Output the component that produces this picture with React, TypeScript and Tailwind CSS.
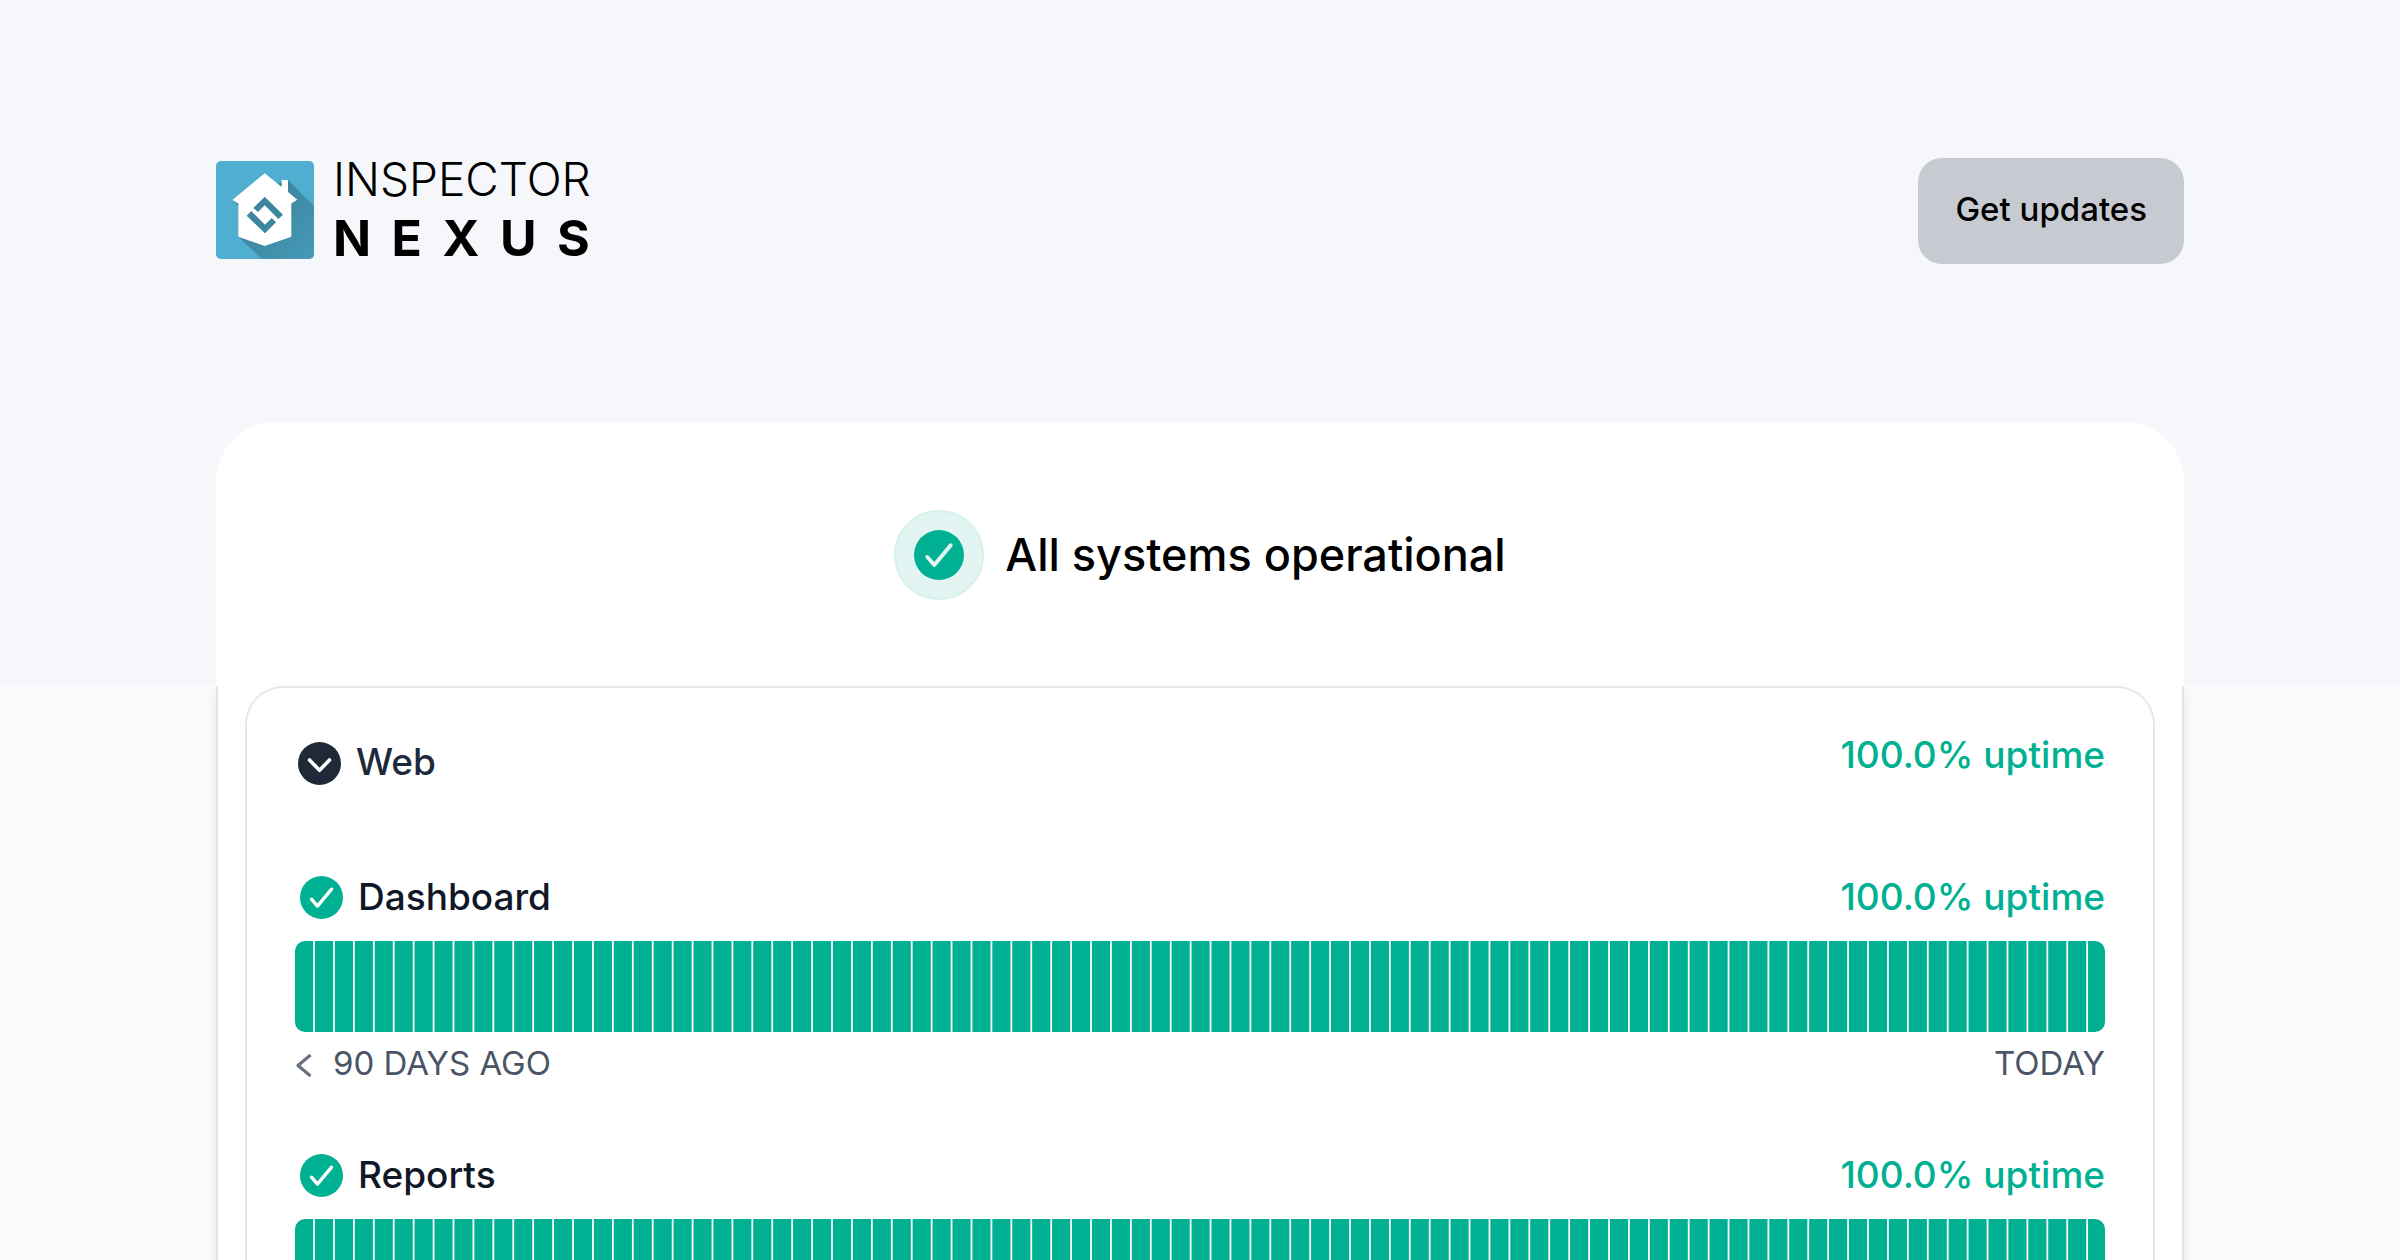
const DAYS = 91;
const services = [
  { name: "Dashboard", showRange: true },
  { name: "Reports", showRange: false },
];

function Logo() {
  return (
    <a href="#" aria-label="Inspector Nexus" className="flex items-center gap-[19px] text-black">
      <svg viewBox="0 0 98 98" className="mb-0.5 size-[98px]" aria-hidden="true">
        <defs>
          <clipPath id="tile">
            <rect width="98" height="98" rx="5" />
          </clipPath>
          <linearGradient id="shade" x1="0" y1="0" x2="1" y2="1">
            <stop offset="0.3" stopColor="#3c849d" />
            <stop offset="1" stopColor="#469bb8" />
          </linearGradient>
        </defs>
        <g clipPath="url(#tile)">
          <rect width="98" height="98" fill="#50aed0" />
          <path d="M72 19L98 45V98H45.5L22.3 75.7V45L16.3 39Z" fill="url(#shade)" />
        </g>
        <path
          d="M48.7 12.3L65.7 25.9V19H72V31L81.3 38.8L75.3 42.5V75.7L48.7 85L22.3 75.7V42.5L16.3 39Z"
          fill="#fff"
        />
        <path d="M48.7 35.7L67 53.7L62.3 58L48.7 44.3L42 51L37.3 47Z" fill="#3d86a0" />
        <path d="M30.7 54.7L35.3 50L49 63.7L55.7 57L60 61.3L49 72.3Z" fill="#3d86a0" />
      </svg>
      <span className="flex flex-col gap-3 pb-1">
        <span className="text-[46px] leading-[46px] font-light">INSPECTOR</span>
        <span className="text-[50px] leading-[48px] font-bold tracking-[0.41em]">NEXUS</span>
      </span>
    </a>
  );
}

function CheckBadge({ className, stroke }: { className: string; stroke: string }) {
  return (
    <svg viewBox="0 0 50 50" className={className} fill="none" aria-hidden="true">
      <circle cx="25" cy="25" r="25" fill="#00b093" />
      <path
        d="M13.3 27L20.3 35L36.7 15.3"
        stroke={stroke}
        strokeWidth="3.9"
        strokeLinecap="round"
        strokeLinejoin="round"
      />
    </svg>
  );
}

function Uptime() {
  return <span className="text-[37px] leading-[56px] font-medium text-[#00b093]">100.0% uptime</span>;
}

function Service({ name, showRange }: { name: string; showRange: boolean }) {
  return (
    <article>
      <div className="flex items-start justify-between">
        <div className="flex items-center gap-[15px] pl-[5px]">
          <CheckBadge className="size-[43px]" stroke="#ffffff" />
          <h3 className="text-[37px] leading-[56px] font-medium text-gray-900">{name}</h3>
        </div>
        <Uptime />
      </div>
      <svg
        role="img"
        aria-label={`${name} uptime over the last 90 days`}
        viewBox={`0 0 ${DAYS * 20 - 3} 91`}
        preserveAspectRatio="none"
        className="mt-4 h-[91px] w-full rounded-[10px]"
      >
        {Array.from({ length: DAYS }, (_, i) => (
          <rect key={i} x={i * 20} width="18.2" height="91" fill="#00b093" />
        ))}
      </svg>
      {showRange && (
        <div className="mt-[11px] flex justify-between text-[33px] leading-10 text-gray-600">
          <span className="flex items-center gap-5">
            <svg viewBox="0 0 18 24" className="mt-1 h-6 w-[18px] text-gray-500" fill="none" aria-hidden="true">
              <path d="M15.5 2L3 12.5L15.5 23" stroke="currentColor" strokeWidth="3.2" strokeLinejoin="round" />
            </svg>
            90 DAYS AGO
          </span>
          <span>TODAY</span>
        </div>
      )}
    </article>
  );
}

export default function App() {
  return (
    <div className="h-screen overflow-hidden bg-[#fafbfd] font-['Inter',sans-serif]">
      <div className="bg-[#f5f7fb] px-[9%] pt-[156px]">
        <header className="flex items-center justify-between pb-[156px]">
          <Logo />
          <button
            type="button"
            className="h-[106px] rounded-3xl bg-[#c8cad2] px-[37px] pb-0.5 text-[33px] font-medium text-black"
          >
            Get updates
          </button>
        </header>
        <section className="flex h-[264px] items-center justify-center gap-[21px] rounded-t-[60px] bg-white pt-0.5">
          <span className="flex size-[90px] items-center justify-center rounded-full border-2 border-[#d6f2eb] bg-[#e2f5f2]">
            <CheckBadge className="size-[50px]" stroke="#e2f5f2" />
          </span>
          <h1 className="text-[45px] leading-[56px] font-medium text-black">All systems operational</h1>
        </section>
      </div>
      <main className="mx-[9%] border-x-2 border-[#e3e4e9] bg-white px-[27px] shadow-[0_8px_12px_rgba(0,0,0,0.09)]">
        <section className="rounded-t-[38px] border-2 border-b-0 border-gray-200 px-12 pt-[39px] pb-16">
          <div className="flex items-start justify-between">
            <button type="button" aria-expanded="true" className="mt-[7px] flex items-center gap-[15px] pl-[3px]">
              <svg viewBox="0 0 43 43" className="mt-0.5 size-[43px]" fill="none" aria-hidden="true">
                <circle cx="21.5" cy="21.5" r="21.5" fill="#1f2937" />
                <path d="M11.5 18L21.5 28.3L31.5 18" stroke="#fff" strokeWidth="3.6" strokeLinecap="round" strokeLinejoin="round" />
              </svg>
              <span className="text-[37px] leading-[56px] font-medium text-gray-800">Web</span>
            </button>
            <Uptime />
          </div>
          <div className="mt-[79px] flex flex-col gap-16">
            {services.map((service) => (
              <Service key={service.name} {...service} />
            ))}
          </div>
        </section>
      </main>
    </div>
  );
}
